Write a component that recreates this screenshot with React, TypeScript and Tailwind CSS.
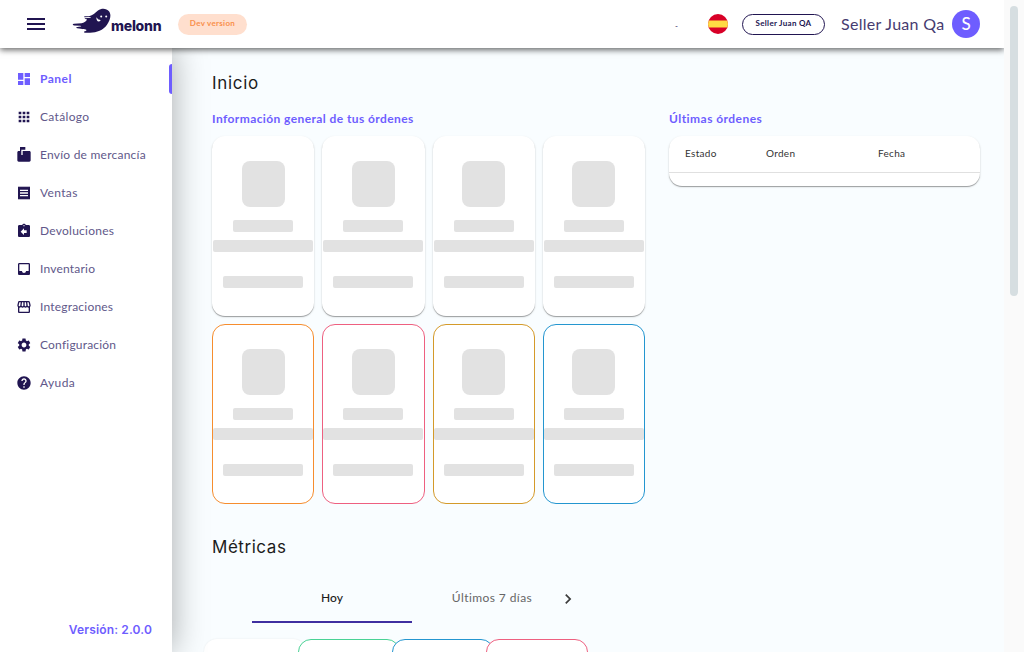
import React from "react";
import {
  MdApps,
  MdAssignmentReturn,
  MdChevronRight,
  MdDashboard,
  MdHelp,
  MdInbox,
  MdMarkunreadMailbox,
  MdMenu,
  MdOutlineStorefront,
  MdReceipt,
  MdSettings,
} from "react-icons/md";

const navItems = [
  { label: "Panel", icon: MdDashboard, tracking: "tracking-[0.5px]" },
  { label: "Catálogo", icon: MdApps, tracking: "tracking-[0.35px]" },
  { label: "Envío de mercancía", icon: MdMarkunreadMailbox, tracking: "tracking-[0.23px]" },
  { label: "Ventas", icon: MdReceipt, tracking: "tracking-[0.35px]" },
  { label: "Devoluciones", icon: MdAssignmentReturn, tracking: "tracking-[0.25px]" },
  { label: "Inventario", icon: MdInbox, tracking: "tracking-[0.2px]" },
  { label: "Integraciones", icon: MdOutlineStorefront, tracking: "tracking-[0.2px]" },
  { label: "Configuración", icon: MdSettings, tracking: "tracking-[0.2px]" },
  { label: "Ayuda", icon: MdHelp, tracking: "tracking-[0.4px]" },
];

const raised =
  "border border-transparent bg-clip-border shadow-[0_1px_1px_rgba(0,0,0,0.34),0_1px_3px_rgba(0,0,0,0.08)]";

const orderCards = [
  raised,
  raised,
  raised,
  raised,
  "border border-[#f68d2e]",
  "border border-[#ee6080]",
  "border border-[#d49a2a]",
  "border border-[#2496d0]",
];

function Logo() {
  return (
    <div className="ml-[24px] flex h-12 w-[94px] items-start text-[#211551]">
      <svg className="mt-[7px] h-[27px] w-[39px] shrink-0" viewBox="0 0 39 27" fill="currentColor">
        <path d="M17 9.200C21 8.500 23 6 26 3.500C29.500 .8 34.500 1 37 4.300C39.800 8.300 38 13.500 35 17.800C31 23.500 24 26 17 25.700C14 25.700 11.800 25.500 11.800 24.900C11.800 24.200 14.500 24 14.500 23.200C14.500 22.400 10 21.900 5.300 21.300C3.900 21.100 3.900 20 5.300 19.900L8.600 19.600C9.500 19.400 9.300 18.900 8.300 18.800L2 18.500C.3 18.200 .3 16.900 2 16.700L9.500 16.200C12.300 15.800 13.500 14.800 14.600 13.300C15.300 12.200 14.200 12 12.700 12L13 11.300L18.500 10.700C19.500 10.400 18.500 10.100 17 10.100L12.500 10.300C11.700 10 12 9.400 13 9.300Z" />
        <circle cx="29.200" cy="9.400" r="1" fill="white" />
        <circle cx="34.200" cy="9.400" r="1" fill="white" />
        <path d="M24.400 10.200C24.200 13.800 26 15.300 28.600 13.800C28.500 12.800 27.600 12.900 26.700 12.600C25.500 12.200 25.500 11 24.400 10.200Z" fill="white" />
      </svg>
      <span className="mt-[17px] font-['Inter'] text-[14px] leading-[18px] font-extrabold tracking-[-0.25px]">
        melonn
      </span>
    </div>
  );
}

function SpainFlag() {
  return (
    <svg className="h-5 w-5" viewBox="0 0 20 20">
      <defs>
        <clipPath id="flag-round">
          <circle cx="10" cy="10" r="10" />
        </clipPath>
      </defs>
      <g clipPath="url(#flag-round)">
        <path d="M0 0h20v20H0z" fill="#d80027" />
        <path d="M0 6.500h20v7H0z" fill="#ffda44" />
      </g>
    </svg>
  );
}

function Header() {
  return (
    <header className="relative z-20 flex h-12 w-[1004px] shrink-0 items-center bg-white pl-6 text-[#211551] shadow-[0_2px_6px_rgba(0,0,0,0.6)] [clip-path:inset(0_0_-12px_0)]">
      <MdMenu className="h-6 w-6" />
      <Logo />
      <span className="ml-[12px] flex h-[21px] w-[69px] items-center justify-center rounded-full bg-[#ffdfce] pb-[2px] text-[8px] font-bold tracking-[0.3px] text-[#f98f4b]">
        Dev version
      </span>
      <div className="ml-auto flex items-center pr-6">
        <span className="mr-[30px] pt-[3px] text-[8px] leading-none">-</span>
        <SpainFlag />
        <span className="ml-[14px] flex h-[21px] w-[83px] items-center justify-center rounded-full border border-[#211551] pb-[2px] text-[8px] font-bold tracking-[0.3px]">
          Seller Juan QA
        </span>
        <span className="ml-4 w-[103px] text-[16px] tracking-[0.3px] whitespace-nowrap text-[#463b70]">Seller Juan Qa</span>
        <span className="ml-2 flex h-7 w-7 items-center justify-center rounded-full bg-[#6e5dff] text-[17px] font-medium text-white">
          S
        </span>
      </div>
    </header>
  );
}

function Sidebar() {
  return (
    <aside className="relative z-10 flex w-[172px] shrink-0 flex-col bg-white pt-4 shadow-[0_0_32px_rgba(0,0,0,0.34)]">
      <nav className="flex flex-col gap-2">
        {navItems.map(({ label, icon: Icon, tracking }, i) => (
          <div
            key={label}
            className={`flex h-[30px] items-center pl-4 ${i === 0 ? "text-[#6e5dff]" : "text-[#211551]"}`}
          >
            <Icon className="h-4 w-4" />
            <span
              className={`ml-2 text-[12px] whitespace-nowrap ${tracking} ${i === 0 ? "font-bold" : "text-[#61588a]"}`}
            >
              {label}
            </span>
            {i === 0 && <span className="ml-auto h-[30px] w-[3px] rounded-l-[3px] bg-[#6e5dff]" />}
          </div>
        ))}
      </nav>
      <span className="mt-auto mb-[13px] pr-5 text-right font-['Inter'] text-[12px] leading-[18px] font-semibold tracking-[0.15px] text-[#6e5dff]">
        Versión: 2.0.0
      </span>
    </aside>
  );
}

function SkeletonCard({ frame }: { frame: string }) {
  return (
    <div className={`flex h-[180px] flex-col items-center rounded-[13px] bg-white pt-6 ${frame}`}>
      <div className="h-[46px] w-[43px] rounded-[8px] bg-[#e2e2e2]" />
      <div className="mt-[13px] h-[11.500px] w-[60px] rounded-[2px] bg-[#e2e2e2]" />
      <div className="mt-[8.500px] h-[11.500px] w-[100px] rounded-[2px] bg-[#e2e2e2]" />
      <div className="mt-[24.500px] h-[11.500px] w-[80px] rounded-[2px] bg-[#e2e2e2]" />
    </div>
  );
}

export default function App() {
  return (
    <div className="flex h-[652px] w-[1024px] overflow-hidden bg-[#fafafa] font-['Lato','Open_Sans',sans-serif]">
      <div className="flex w-[1004px] shrink-0 flex-col">
        <Header />
        <div className="flex min-h-0 flex-1">
          <Sidebar />
          <main className="flex-1 overflow-hidden bg-[#f9fdff] pr-6 pl-10">
            <h1 className="mt-[22px] font-['Inter'] text-[17px] leading-[26px] tracking-[0.7px] text-[#1c1c1c]">Inicio</h1>
            <div className="mt-[14px] flex gap-6">
              <section className="w-[433px]">
                <h2 className="text-[12px] leading-[18px] font-bold tracking-[0.41px] text-[#6e5dff]">
                  Información general de tus órdenes
                </h2>
                <div className="mt-2 grid grid-cols-4 gap-2">
                  {orderCards.map((frame, i) => (
                    <SkeletonCard key={i} frame={frame} />
                  ))}
                </div>
              </section>
              <section className="w-[311px]">
                <h2 className="text-[12px] leading-[18px] font-bold tracking-[0.45px] text-[#6e5dff]">
                  Últimas órdenes
                </h2>
                <div className="mt-2 h-[50px] rounded-[13px] bg-white shadow-[0_1px_1px_rgba(0,0,0,0.34),0_1px_3px_rgba(0,0,0,0.08)]">
                  <div className="grid h-[37px] grid-cols-[81px_112px_1fr] items-center border-b border-[#e0e0e0] pb-[2px] pl-4 text-[10px] tracking-[0.3px] text-[#333]">
                    <span>Estado</span>
                    <span>Orden</span>
                    <span>Fecha</span>
                  </div>
                </div>
              </section>
            </div>
            <h1 className="mt-[30px] font-['Inter'] text-[17px] leading-[26px] tracking-[0.55px] text-[#1c1c1c]">Métricas</h1>
            <div className="ml-10 mt-[14px] flex h-[49px] w-[336px] overflow-hidden text-[12px]">
              <div className="flex w-40 shrink-0 items-center justify-center border-b-2 border-[#3f2fa0] font-medium text-[#1c1c1c]">
                Hoy
              </div>
              <div className="flex w-40 shrink-0 items-center justify-center pb-[2px] tracking-[0.42px] text-[#666]">
                Últimos 7 días
              </div>
              <MdChevronRight className="mt-[15px] -ml-[14px] h-5 w-5 shrink-0 text-[#3c3c3c]" />
            </div>
            <div className="mt-4 -ml-2 flex -space-x-2">
              <div className="h-[180px] w-[102px] rounded-[13px] bg-white shadow-[0_0_2px_rgba(0,0,0,0.08)]" />
              <div className="h-[180px] w-[102px] rounded-[13px] border border-[#4ad295] bg-white" />
              <div className="h-[180px] w-[102px] rounded-[13px] border border-[#2496d0] bg-white" />
              <div className="h-[180px] w-[102px] rounded-[13px] border border-[#ee6080] bg-white" />
            </div>
          </main>
        </div>
      </div>
      <div className="flex w-5 justify-center pt-[6px]">
        <div className="h-[290px] w-2 rounded-full bg-[#d6dee1]" />
      </div>
    </div>
  );
}
